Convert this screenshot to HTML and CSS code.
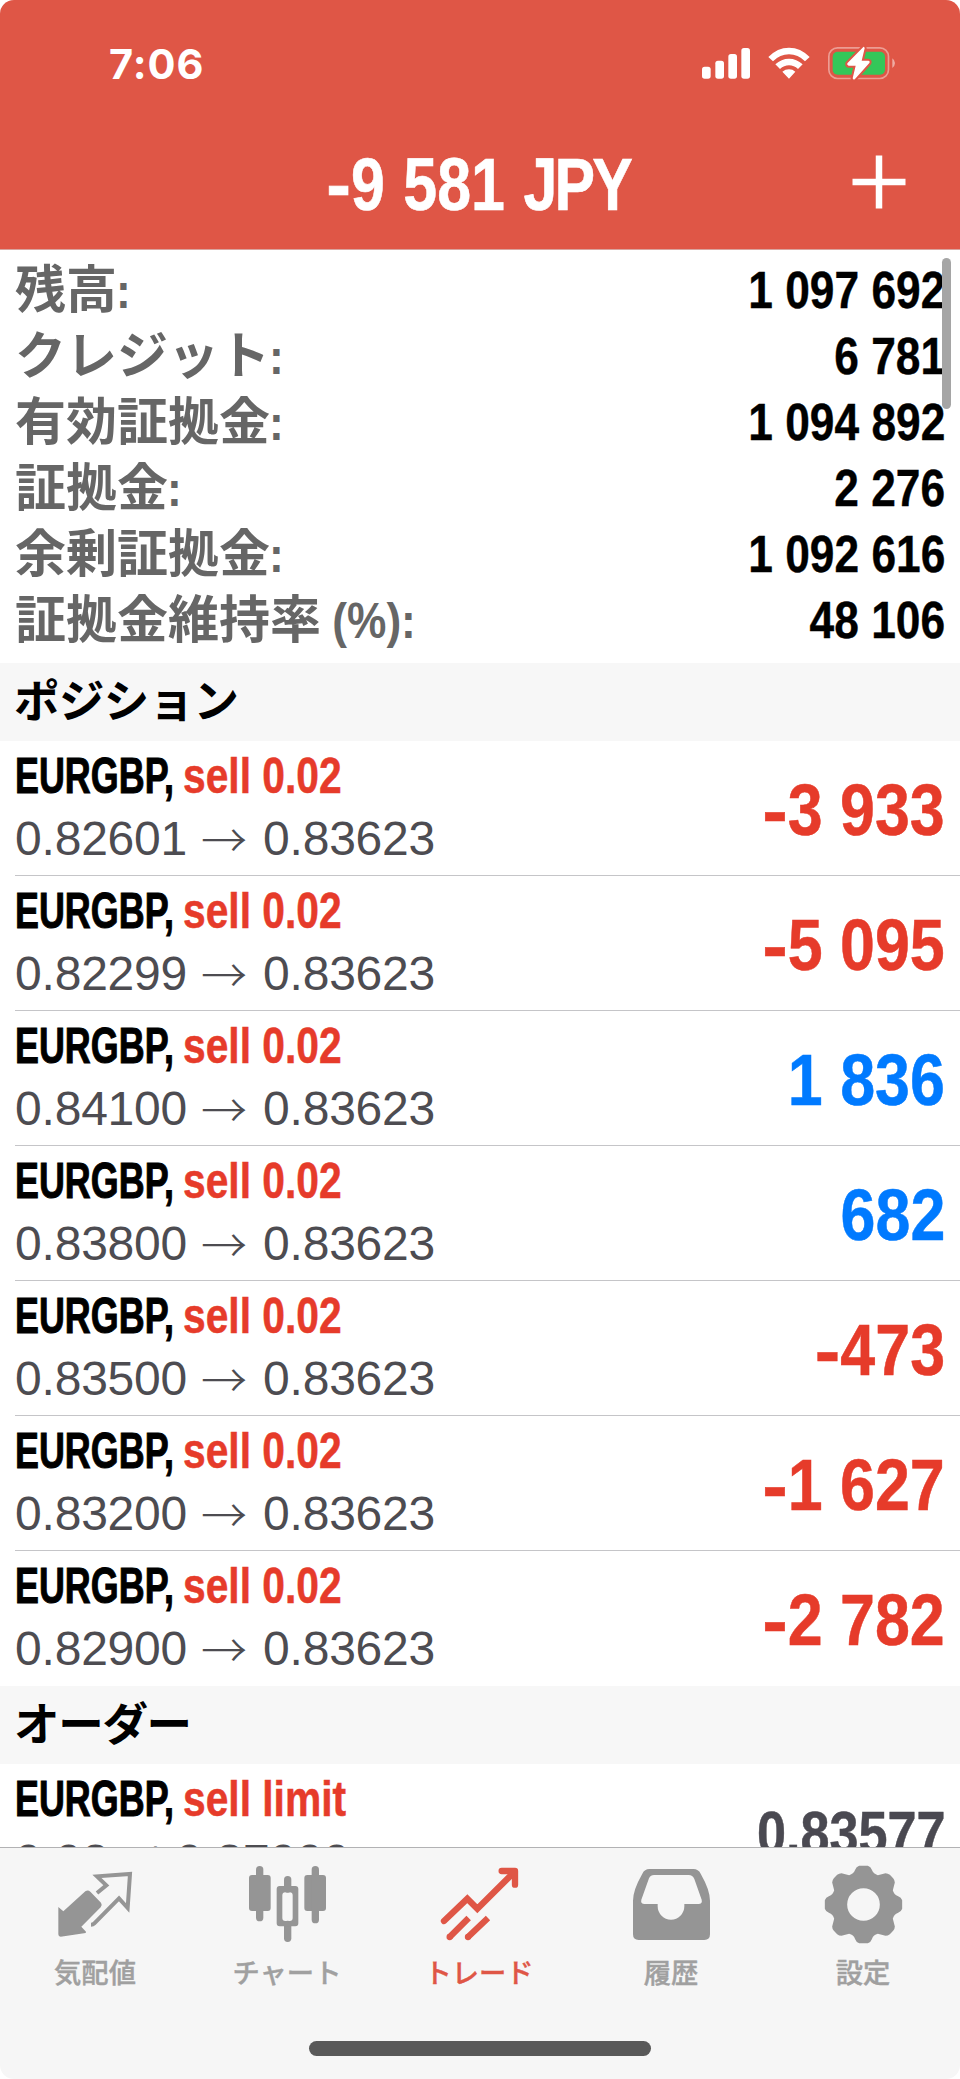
FILE: index.html
```html
<!DOCTYPE html>
<html lang="ja">
<head>
<meta charset="utf-8">
<title>トレード</title>
<link rel="stylesheet" href="styles.css">
</head>
<body>
<div class="screen">
  <header class="header">
    <div class="status">
      <span class="clock">7:06</span>
      <svg class="status-icons" width="200" height="40" viewBox="660 130 600 120" fill="#fff">
        <rect x="666" y="201" width="26" height="36" rx="8"/>
        <rect x="706" y="183" width="26" height="54" rx="8"/>
        <rect x="745" y="163" width="26" height="74" rx="8"/>
        <rect x="784" y="145" width="26" height="92" rx="8"/>
        <path d="M865 172Q892 144 927 144T989 172L975 185Q954 164 927 164T879 185ZM886 194Q904 177 927 177T968 194L954 208Q942 197 927 197T900 208ZM907 216Q916 209 927 209T946 216L927 237Z"/>
        <rect x="1046.500" y="144.500" width="179" height="92" rx="26" fill="none" stroke="#fff" stroke-opacity=".42" stroke-width="5"/>
        <path d="M1237 176Q1245 182 1245 190T1237 205Z" fill-opacity=".5"/>
        <rect x="1058" y="156" width="157" height="69" rx="15" fill="#34c759"/>
        <path d="M1150 142L1102 191Q1100 197 1106 198L1127 198L1118 236Q1120 242 1125 238L1168 190Q1171 184 1165 183L1145 183L1154 146Q1153 140 1150 142Z" stroke="#df5646" stroke-width="12" paint-order="stroke"/>
      </svg>
    </div>
    <div class="titlebar">
      <h1 class="title"><span class="minus">-</span>9 581 <span class="currency">JPY</span></h1>
      <svg class="add" width="54" height="54" viewBox="0 0 54 54" stroke="#fff" stroke-width="6.500"><path d="M27 0.500V53.500M.500 27H53.500"/></svg>
    </div>
  </header>

  <main class="content">
    <dl class="summary">
      <div class="line"><dt>残高<span class="lat">:</span></dt><dd>1 097 692</dd></div>
      <div class="line"><dt>クレジット<span class="lat">:</span></dt><dd>6 781</dd></div>
      <div class="line"><dt>有効証拠金<span class="lat">:</span></dt><dd>1 094 892</dd></div>
      <div class="line"><dt>証拠金<span class="lat">:</span></dt><dd>2 276</dd></div>
      <div class="line"><dt>余剰証拠金<span class="lat">:</span></dt><dd>1 092 616</dd></div>
      <div class="line"><dt>証拠金維持率<span class="lat"> (%):</span></dt><dd>48 106</dd></div>
    </dl>
    <div class="scrollbar"></div>

    <h2 class="section">ポジション</h2>
    <div class="row"><div class="info"><div class="deal"><span class="symbol">EURGBP,</span><span class="side">sell 0.02</span></div><div class="rates"><span class="from">0.82601</span><span class="arrow">→</span><span>0.83623</span></div></div><div class="profit"><span class="minus">-</span>3 933</div></div>
    <div class="row"><div class="info"><div class="deal"><span class="symbol">EURGBP,</span><span class="side">sell 0.02</span></div><div class="rates"><span class="from">0.82299</span><span class="arrow">→</span><span>0.83623</span></div></div><div class="profit"><span class="minus">-</span>5 095</div></div>
    <div class="row"><div class="info"><div class="deal"><span class="symbol">EURGBP,</span><span class="side">sell 0.02</span></div><div class="rates"><span class="from">0.84100</span><span class="arrow">→</span><span>0.83623</span></div></div><div class="profit gain">1 836</div></div>
    <div class="row"><div class="info"><div class="deal"><span class="symbol">EURGBP,</span><span class="side">sell 0.02</span></div><div class="rates"><span class="from">0.83800</span><span class="arrow">→</span><span>0.83623</span></div></div><div class="profit gain">682</div></div>
    <div class="row"><div class="info"><div class="deal"><span class="symbol">EURGBP,</span><span class="side">sell 0.02</span></div><div class="rates"><span class="from">0.83500</span><span class="arrow">→</span><span>0.83623</span></div></div><div class="profit"><span class="minus">-</span>473</div></div>
    <div class="row"><div class="info"><div class="deal"><span class="symbol">EURGBP,</span><span class="side">sell 0.02</span></div><div class="rates"><span class="from">0.83200</span><span class="arrow">→</span><span>0.83623</span></div></div><div class="profit"><span class="minus">-</span>1 627</div></div>
    <div class="row last"><div class="info"><div class="deal"><span class="symbol">EURGBP,</span><span class="side">sell 0.02</span></div><div class="rates"><span class="from">0.82900</span><span class="arrow">→</span><span>0.83623</span></div></div><div class="profit"><span class="minus">-</span>2 782</div></div>

    <h2 class="section orders">オーダー</h2>
    <div class="row last"><div class="info"><div class="deal"><span class="symbol">EURGBP,</span><span class="side">sell limit</span></div><div class="rates order-rates">0.02 at 0.87000</div></div><div class="profit price">0.83577</div></div>
  </main>

  <nav class="tabs">
    <div class="tab"><svg width="96" height="84" viewBox="144 600 288 252"><path d="M175 741L190 754L256 694Q264 689 271 695L303 728Q308 735 302 742L244 800L258 815L257 819L182 830Q175 830 175 823Z" fill="#959595"/><path d="M291 699L319 676L291 649L390 642L383 744L357 715L283 790Q279 794 273 794" fill="none" stroke="#959595" stroke-width="12"/></svg><span>気配値</span></div>
    <div class="tab"><svg width="96" height="84" viewBox="720 600 288 252" fill="#959595"><rect x="747" y="645" width="65" height="108" rx="9"/><rect x="768" y="618" width="22" height="166" rx="11"/><rect x="913" y="645" width="65" height="108" rx="9"/><rect x="935" y="618" width="22" height="172" rx="11"/><rect x="852" y="648" width="22" height="50" rx="11"/><rect x="852" y="782" width="22" height="64" rx="11"/><path fill-rule="evenodd" d="M839 678H886Q895 678 895 687V790Q895 799 886 799H839Q830 799 830 790V687Q830 678 839 678ZM856 697Q847 697 847 706V774Q847 783 856 783H869Q878 783 878 774V706Q878 697 869 697Z"/></svg><span>チャート</span></div>
    <div class="tab active"><svg width="96" height="84" viewBox="1296 600 288 252" fill="none" stroke="#df5646" stroke-width="19"><path d="M1332 783L1402 716L1432 746L1544 635" stroke-linecap="round"/><path d="M1505 633H1545V674" stroke-linecap="round" stroke-linejoin="round"/><path d="M1349 831L1406 774M1404 831L1464 774"/><g fill="#df5646" stroke="none"><circle cx="1349" cy="831" r="9.500"/><circle cx="1404" cy="831" r="9.500"/></g></svg><span>トレード</span></div>
    <div class="tab"><svg width="96" height="84" viewBox="432 600 288 252"><path fill="#959595" fill-rule="evenodd" d="M508 627H640Q655 627 662 641Q690 690 690 722V823Q690 840 673 840H476Q459 840 459 823V722Q459 690 487 641Q494 627 508 627ZM522 645Q512 645 507 655L484 719Q481 732 494 732H533V739A40 40 0 0 0 613 739V732H655Q668 732 665 719L643 657Q638 645 626 645Z"/></svg><span>履歴</span></div>
    <div class="tab"><svg width="96" height="84" viewBox="1008 600 288 252"><g fill="#959595" transform="translate(1150.500 733.500)"><path fill-rule="evenodd" d="M-13 -116H13Q22 -113 25 -104Q30 -91 43 -88L66 -94Q73 -94 79 -89L89 -79Q94 -73 94 -66L88 -43Q91 -30 104 -25Q113 -22 116 -13V13Q113 22 104 25Q91 30 88 43L94 66Q94 73 89 79L79 89Q73 94 66 94L43 88Q30 91 25 104Q22 113 13 116H-13Q-22 113 -25 104Q-30 91 -43 88L-66 94Q-73 94 -79 89L-89 79Q-94 73 -94 66L-88 43Q-91 30 -104 25Q-113 22 -116 13V-13Q-113 -22 -104 -25Q-91 -30 -88 -43L-94 -66Q-94 -73 -89 -79L-79 -89Q-73 -94 -66 -94L-43 -88Q-30 -91 -25 -104Q-22 -113 -13 -116ZM49 0A49 49 0 1 0 -49 0A49 49 0 1 0 49 0Z"/></g></svg><span>設定</span></div>
    <div class="home"></div>
  </nav>
</div>
</body>
</html>
```

FILE: styles.css
```css
* { box-sizing: border-box; margin: 0; padding: 0; }
body { background: #fff; font-family: "Liberation Sans", "Noto Sans CJK JP", sans-serif; }
.screen { width: 960px; height: 2079px; display: flex; flex-direction: column; overflow: hidden; background: #fff; border-radius: 14px; }

.header { flex: none; height: 250px; background: #df5646; border-bottom: 1px solid #d9a49e; color: #fff; }
.status { height: 120px; display: flex; justify-content: space-between; padding: 43px 60px 0 109px; }
.clock { font: 700 41.500px/42px Inter, sans-serif; letter-spacing: 1px; }
.titlebar { height: 120px; display: grid; grid-template-columns: 130px 1fr 130px; align-items: center; }
.title { grid-column: 2; justify-self: center; padding-top: 7px; font-size: 75px; line-height: 80px; font-weight: 700; word-spacing: 2px; white-space: nowrap; transform: scaleX(.812); -webkit-text-stroke: .6px; }
.currency { letter-spacing: -3.500px; }
.minus { display: inline-block; transform: scaleX(1.22); transform-origin: right; }
.add { justify-self: start; margin: 3px 0 0 22px; }

.content { position: relative; flex: none; height: 1597px; overflow: hidden; }
.summary { height: 413px; padding: 7px 15px 0 15px; }
.line { height: 66px; display: flex; justify-content: space-between; font-weight: 700; line-height: 66px; white-space: nowrap; }
dt { height: 50px; font-family: "Noto Sans CJK JP", sans-serif; font-size: 51px; line-height: 58px; color: #666; }
.lat { display: inline-block; margin-left: -1px; font-family: "Liberation Sans", sans-serif; font-size: 50px; line-height: 50px; white-space: pre; transform: scaleX(.885); transform-origin: left; }
dd { font-size: 52px; color: #000; transform: scaleX(.852); transform-origin: right; -webkit-text-stroke: .4px; }
.scrollbar { position: absolute; top: 8px; right: 9px; width: 9px; height: 151px; border-radius: 5px; background: #a5a5a5; }

.section { height: 78px; padding-left: 14px; background: #f7f7f7; font: 700 45.500px/71px "Noto Sans CJK JP", sans-serif; letter-spacing: -.600px; }
.orders { letter-spacing: -1.300px; }
.row { height: 135px; margin-left: 15px; padding-right: 15px; border-bottom: 1px solid #c5c5c8; display: flex; justify-content: space-between; }
.row.last { border-bottom-color: transparent; }
.info { padding-top: 7px; }
.deal { height: 61px; display: grid; grid-template-columns: 168px auto; font-size: 50px; line-height: 56px; font-weight: 700; white-space: nowrap; }
.symbol { justify-self: start; transform: scaleX(.718); transform-origin: left; -webkit-text-stroke: 1px; }
.side { color: #e63b2a; justify-self: start; transform: scaleX(.815); transform-origin: left; -webkit-text-stroke: .5px; }
.rates { display: flex; font-size: 48px; line-height: 60px; letter-spacing: -.200px; color: #4d4c51; white-space: pre; }
.order-rates { letter-spacing: .100px; }
.from { width: 178px; }
.arrow { width: 70px; padding-right: 8px; text-align: center; font: 300 46px/56px "Noto Sans CJK JP", sans-serif; }
.profit { font-size: 71.500px; line-height: 138px; font-weight: 700; color: #e63b2a; white-space: nowrap; transform: scaleX(.878); transform-origin: right; -webkit-text-stroke: .5px; }
.gain { color: #007aff; }
.price { font-size: 61px; color: #4a4951; transform: scaleX(.855); }

.tabs { position: relative; flex: none; height: 232px; display: grid; grid-template-columns: repeat(5, 1fr); background: #f6f6f6; border-top: 1px solid #b2b2b4; }
.tab { display: flex; flex-direction: column; align-items: center; padding-top: 12px; font: 500 27.300px/40px "Noto Sans CJK JP", sans-serif; color: #a0a0a0; }
.tab span { margin: 7px 2px 0 0; -webkit-text-stroke: .4px; }
.active { color: #df5646; }
.home { position: absolute; left: 309px; top: 193px; width: 342px; height: 15px; border-radius: 8px; background: #595959; }
```
